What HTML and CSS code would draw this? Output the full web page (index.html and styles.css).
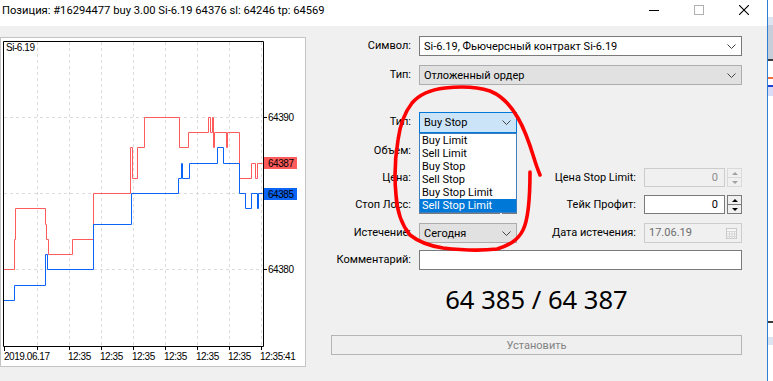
FILE: index.html
```html
<!DOCTYPE html>
<html lang="ru">
<head>
    <meta charset="UTF-8">
    <title>Позиция</title>
    <link rel="stylesheet" href="styles.css">
</head>
<body>
<div class="screen">
    <div class="window">
        <div class="titlebar">
            <span class="title">Позиция: #16294477 buy 3.00 Si-6.19 64376 sl: 64246 tp: 64569</span>
            <div class="caption-buttons">
                <span class="cap-btn"><svg width="10" height="10"><path d="M0 5.5H10" stroke="#000"/></svg></span>
                <span class="cap-btn"><svg width="10" height="10"><rect x="0.5" y="0.5" width="9" height="9" fill="none" stroke="#b0b0b0"/></svg></span>
                <span class="cap-btn"><svg width="10" height="10"><path d="M0 0L10 10M10 0L0 10" stroke="#000" stroke-width="1.1"/></svg></span>
            </div>
        </div>

        <div class="content">
            <div class="chart-panel">
                <svg width="307" height="330" class="chart">
                    <g transform="translate(0,-37)">
                        <rect x="0.5" y="37.5" width="305" height="329" fill="#fff" stroke="#c4c4c4"/>
                        <g stroke="#dcdcdc" stroke-dasharray="3 3" fill="none">
                            <path d="M37.5 42V346M69.5 42V346M101.5 42V346M133.5 42V346M165.5 42V346M197.5 42V346M229.5 42V346M261.5 42V346"/>
                            <path d="M4 117.5H263M4 193.5H263M4 269.5H263"/>
                        </g>
                        <g fill="none" stroke-width="1" transform="translate(0.5,0.5)">
                            <polyline stroke="#ff5b5b" points="3,269 14,269 14,239 15,239 15,208 45,208 45,224 46,224 46,239 48,239 48,254 72,254 72,239 93,239 93,193 130,193 130,147 132,147 132,178 137,178 137,147 144,147 144,117 179,117 179,147 188,147 188,132 208,132 208,117 210,117 210,132 212,132 212,117 213,117 213,147 214,147 214,132 226,132 226,147 227,147 227,132 239,132 239,178 251,178 251,163 255,163 255,178 257,178 257,163 262,163"/>
                            <polyline stroke="#0a64f5" points="3,300 14,300 14,285 45,285 45,254 47,254 47,269 93,269 93,224 131,224 131,193 178,193 178,178 181,178 181,163 182,163 182,178 189,178 189,163 217,163 217,147 223,147 223,163 239,163 239,193 245,193 245,208 251,208 251,193 257,193 257,208 258,208 258,193 262,193"/>
                        </g>
                        <path d="M3.5 41.5H263.5V346.5H3.5Z" fill="none" stroke="#000"/>
                        <path d="M263 117.5H267M263 193.5H267M263 269.5H267M263 163.5H266M4.5 346V351M37.5 346V350M69.5 346V350M101.5 346V350M133.5 346V350M165.5 346V350M197.5 346V350M229.5 346V350M261.5 346V350" stroke="#000"/>
                        <g class="axis-text">
                            <text x="6" y="51">Si-6.19</text>
                            <text x="268" y="121">64390</text>
                            <rect x="264" y="157" width="33" height="12" fill="#ff5b5b"/>
                            <text x="268" y="167" fill="#fff">64387</text>
                            <rect x="264" y="188" width="33" height="12" fill="#0a64f5"/>
                            <text x="268" y="198" fill="#fff">64385</text>
                            <text x="268" y="273">64380</text>
                            <text x="4" y="360">2019.06.17</text>
                            <text x="68" y="360">12:35</text>
                            <text x="100" y="360">12:35</text>
                            <text x="132" y="360">12:35</text>
                            <text x="164" y="360">12:35</text>
                            <text x="196" y="360">12:35</text>
                            <text x="228" y="360">12:35</text>
                            <text x="260" y="360">12:35:41</text>
                        </g>
                    </g>
                </svg>
            </div>

            <div class="order-form">
                <div class="form-grid">
                    <label class="lbl">Символ:</label>
                    <div class="select select-white wide">Si-6.19, Фьючерсный контракт Si-6.19<svg class="chev" width="9" height="5"><path d="M0.5 0.5L4.5 4.5L8.5 0.5" stroke="#444" fill="none"/></svg></div>

                    <label class="lbl">Тип:</label>
                    <div class="select select-grey wide">Отложенный ордер<svg class="chev" width="9" height="5"><path d="M0.5 0.5L4.5 4.5L8.5 0.5" stroke="#444" fill="none"/></svg></div>

                    <label class="lbl">Тип:</label>
                    <div class="select select-focus">Buy Stop<svg class="chev" width="9" height="5"><path d="M0.5 0.5L4.5 4.5L8.5 0.5" stroke="#444" fill="none"/></svg>
                        <ul class="dropdown">
                            <li>Buy Limit</li>
                            <li>Sell Limit</li>
                            <li>Buy Stop</li>
                            <li>Sell Stop</li>
                            <li>Buy Stop Limit</li>
                            <li class="active">Sell Stop Limit</li>
                        </ul>
                    </div>
                    <div></div><div></div>

                    <label class="lbl">Объем:</label>
                    <div class="spin-field"><div class="field"></div><div class="spinner"><span class="up"></span><span class="down"></span></div></div>
                    <div></div><div></div>

                    <label class="lbl">Цена:</label>
                    <div class="spin-field"><div class="field"></div><div class="spinner"><span class="up"></span><span class="down"></span></div></div>
                    <label class="lbl">Цена Stop Limit:</label>
                    <div class="spin-field disabled"><div class="field">0</div><div class="spinner"><span class="up"></span><span class="down"></span></div></div>

                    <label class="lbl">Стоп Лосс:</label>
                    <div class="spin-field"><div class="field"></div><div class="spinner"><span class="up"></span><span class="down"></span></div></div>
                    <label class="lbl">Тейк Профит:</label>
                    <div class="spin-field"><div class="field">0</div><div class="spinner"><span class="up"></span><span class="down"></span></div></div>

                    <label class="lbl">Истечение:</label>
                    <div class="select select-grey">Сегодня<svg class="chev" width="9" height="5"><path d="M0.5 0.5L4.5 4.5L8.5 0.5" stroke="#444" fill="none"/></svg></div>
                    <label class="lbl">Дата истечения:</label>
                    <div class="field date-field">17.06.19
                        <svg class="cal" width="11" height="11"><rect x="0.5" y="0.5" width="10" height="10" fill="#f7f7f7" stroke="#c8c8c8"/><path d="M0.5 3.5H10.5M0.5 6H10.5M0.5 8.5H10.5M3.5 3V11M6 3V11M8.5 3V11" stroke="#d6d6d6"/></svg>
                    </div>

                    <label class="lbl">Комментарий:</label>
                    <div class="field wide"></div>
                </div>

                <div class="quote">64 385 / 64 387</div>
                <button class="btn-submit" disabled>Установить</button>
            </div>
        </div>

        <svg class="scribble" width="767" height="381">
            <path d="M530 172 C530 195 529 218 523 230 C518 240 510 245 497 249 C480 251 460 250 443 248 C430 246 420 243 410 235 C401 224 397 212 396 195 C394 175 395 158 398 140 C400 125 405 112 412 103 C418 96 428 90 445 88 C462 86 478 87 490 91 C500 95 510 104 518 118 C525 130 530 145 534 158 C536 165 538 170 540 175" fill="none" stroke="#ff0000" stroke-width="3.6" stroke-linecap="round"/>
        </svg>
    </div>

    <div class="side-strip">
        <div class="ss-white"></div>
        <div class="ss-light"></div>
        <div class="ss-grey"></div>
        <div class="ss-line"></div>
        <div class="ss-white2"></div>
        <div class="ss-red"></div>
        <div class="ss-blue-text"></div>
        <div class="ss-blue"></div>
        <div class="ss-lav"></div>
        <div class="ss-body"></div>
        <div class="ss-line"></div>
        <div class="ss-white3"></div>
        <div class="ss-light2"></div>
        <div class="ss-rest"></div>
    </div>
</div>
</body>
</html>
```

FILE: styles.css
```css
* { box-sizing: border-box; }
body { margin: 0; font-family: Roboto, "Noto Sans", sans-serif; font-size: 11px; color: #000; }

.screen { display: flex; width: 773px; height: 381px; overflow: hidden; background: #fff; }
.window { position: relative; width: 767px; height: 381px; display: flex; flex-direction: column; background: #f0f0f0; }

/* title bar */
.titlebar { height: 26px; flex: none; background: #fff; display: flex; justify-content: space-between; }
.title { padding-left: 2px; line-height: 21px; font-size: 11.2px; white-space: nowrap; }
.caption-buttons { display: flex; margin-right: 1px; }
.cap-btn { width: 45px; height: 26px; display: flex; justify-content: center; padding-top: 5px; }

/* chart */
.content { display: flex; flex: 1; }
.chart-panel { width: 307px; height: 330px; margin-top: 11px; flex: none; }
.chart { display: block; }
.axis-text text { font-family: "Liberation Sans", sans-serif; font-size: 10px; letter-spacing: -0.45px; fill: #000; }

/* order form */
.order-form { flex: 1; padding-top: 10px; }
.form-grid {
    display: grid;
    grid-template-columns: 104px 98px 111px 98px;
    grid-template-rows: 29px 47px 29px 27px 27px 28px 27px 20px;
    column-gap: 8px;
    align-items: start;
}
.lbl { line-height: 20px; text-align: right; white-space: nowrap; }
.wide { grid-column: span 3; }

.select {
    position: relative;
    height: 20px;
    display: flex;
    align-items: center;
    padding: 0 5px 0 4px;
    border: 1px solid #adadad;
    white-space: nowrap;
}
.select .chev { margin-left: auto; flex: none; }
.select-white { background: #fff; border-color: #7a7a7a; }
.select-grey { background: #e1e1e1; }
.select-focus { height: 21px; background: #cce4f7; border-color: #0078d7; }

.dropdown {
    position: absolute;
    top: 20px;
    left: -1px;
    width: 98px;
    margin: 0;
    padding: 0;
    list-style: none;
    background: #fff;
    border: 1px solid #3f7fc0;
    z-index: 2;
}
.dropdown li { height: 13px; line-height: 13px; padding-left: 2px; }
.dropdown li.active { background: #0078d7; color: #fff; }

.field {
    height: 20px;
    background: #fff;
    border: 1px solid #7a7a7a;
    line-height: 18px;
    padding: 0 6px 0 4px;
    text-align: right;
}
.spin-field { display: flex; gap: 2px; height: 20px; }
.spin-field .field { flex: 1; height: 19px; }
.spinner { width: 15px; height: 19px; display: flex; flex-direction: column; border: 1px solid #7a7a7a; background: #f0f0f0; }
.spinner span { flex: 1; display: flex; align-items: center; justify-content: center; }
.spinner .up { border-bottom: 1px solid #7a7a7a; }
.spinner .up::after { content: ""; border-left: 3px solid transparent; border-right: 3px solid transparent; border-bottom: 3px solid #000; }
.spinner .down::after { content: ""; border-left: 3px solid transparent; border-right: 3px solid transparent; border-top: 3px solid #000; }

.disabled .field { background: #f0f0f0; border-color: #cccccc; color: #8c8c8c; }
.disabled .spinner { border-color: #d9d9d9; }
.disabled .spinner .up { border-bottom-color: #d9d9d9; }
.disabled .spinner .up::after { border-bottom-color: #a0a0a0; }
.disabled .spinner .down::after { border-top-color: #a0a0a0; }

.date-field {
    display: flex;
    align-items: center;
    justify-content: space-between;
    text-align: left;
    background: #f0f0f0;
    border-color: #cccccc;
    color: #6d6d6d;
    padding: 0 4px 0 4px;
}

.quote {
    margin: 5px 0 0 24px;
    width: 411px;
    height: 50px;
    line-height: 50px;
    text-align: center;
    font-family: "Noto Sans", sans-serif;
    font-size: 25.6px;
}
.btn-submit {
    display: block;
    margin: 10px 0 0 24px;
    width: 411px;
    height: 20px;
    padding: 0;
    font-family: Roboto, "Noto Sans", sans-serif;
    font-size: 11px;
    color: #838383;
    background: #efefef;
    border: 1px solid #b5b5b5;
}

/* hand-drawn red mark over the form */
.scribble { position: absolute; left: 0; top: 0; pointer-events: none; z-index: 5; }

/* edge of the window behind */
.side-strip { width: 6px; border-left: 1px solid #2d7fd2; display: flex; flex-direction: column; }
.ss-white { height: 17px; background: #fff; }
.ss-light { height: 8px; background: #dbe5f1; }
.ss-grey { height: 34px; background: #c6ced9; }
.ss-line { height: 2px; background: #3a3a3a; }
.ss-white2 { height: 16px; background: #fff; }
.ss-red { height: 2px; background: #f26d3d; }
.ss-blue-text { height: 6px; background: #fff; }
.ss-blue { height: 2px; background: #1e40d8; }
.ss-lav { height: 9px; background: #d9dcf7; }
.ss-body { height: 225px; background: #fff; }
.ss-white3 { height: 14px; background: #fff; }
.ss-light2 { height: 8px; background: #dbe5f1; }
.ss-rest { flex: 1; background: #fff; }
```
